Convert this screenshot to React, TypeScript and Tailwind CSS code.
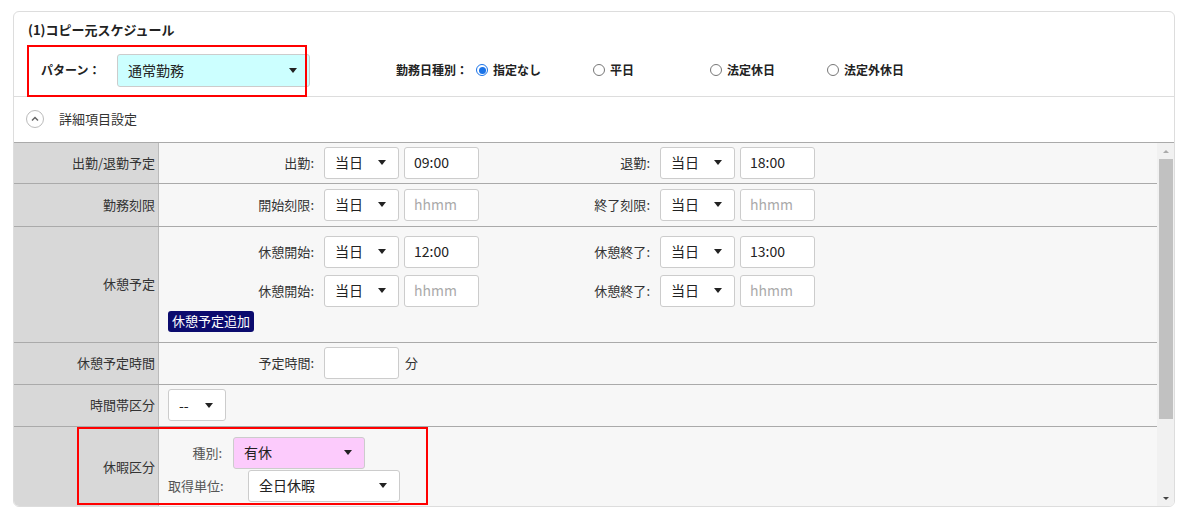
import React from "react";

const font = { fontFamily: '"Noto Sans CJK JP", "Noto Sans", sans-serif' };

function Caret() {
    return <span className="w-0 h-0 border-l-[4px] border-r-[4px] border-t-[5px] border-l-transparent border-r-transparent border-t-[#222]" />;
}

function Sel({ value, w, bg = "bg-white", h = "h-[32px]" }: { value: string; w: string; bg?: string; h?: string }) {
    return (
        <div className={`${w} ${h} ${bg} border border-[#ccc] rounded-[3px] flex items-center justify-between pl-[10px] pr-[12px] text-[14px] text-[#222]`}>
            <span>{value}</span>
            <Caret />
        </div>
    );
}

function Inp({ value, placeholder }: { value?: string; placeholder?: string }) {
    return (
        <div className="w-[75px] h-[32px] bg-white border border-[#ccc] rounded-[3px] flex items-center pl-[9px] text-[14px]">
            {value ? <span className="text-[#222]">{value}</span> : <span className="text-[#aaa]">{placeholder}</span>}
        </div>
    );
}

function Pair({ l1, v1, p1, l2, v2, p2 }: { l1: string; v1?: string; p1?: string; l2: string; v2?: string; p2?: string }) {
    return (
        <div className="flex items-center">
            <div className="w-[165px] text-right pr-[10px] text-[13px] text-[#333]">{l1}:</div>
            <Sel value="当日" w="w-[75px]" />
            <div className="w-[5px]" />
            <Inp value={v1} placeholder={p1} />
            <div className="w-[181px] text-right pr-[10px] text-[13px] text-[#333]">{l2}:</div>
            <Sel value="当日" w="w-[75px]" />
            <div className="w-[5px]" />
            <Inp value={v2} placeholder={p2} />
        </div>
    );
}

function Row({ label, h, children, last }: { label: string; h: string; children: React.ReactNode; last?: boolean }) {
    return (
        <div className={`flex ${h} ${last ? "" : "border-b border-[#aaa]"}`}>
            <div className="w-[145px] shrink-0 bg-[#d8d8d8] border-r border-[#bbb] flex items-center justify-end pr-[3px] text-[13px] text-[#333]">{label}</div>
            <div className="flex-1 bg-[#f7f7f7]">{children}</div>
        </div>
    );
}

function Radio({ on, label }: { on?: boolean; label: string }) {
    return (
        <div className="flex items-center gap-[5px] w-[117px]">
            <span className={`w-[12px] h-[12px] rounded-full border ${on ? "border-[#1a73e8] bg-white flex items-center justify-center" : "border-[#777] bg-white"}`}>
                {on && <span className="w-[7px] h-[7px] rounded-full bg-[#1a73e8]" />}
            </span>
            <span className="font-bold text-[12px] text-[#222]">{label}</span>
        </div>
    );
}

export default function App() {
    return (
        <div className="w-[1189px] h-[514px] bg-white pt-[11px] pl-[13px]" style={font}>
            <div className="w-[1162px] h-[496px] border border-[#ddd] rounded-[6px] overflow-hidden flex flex-col">
                <div className="px-[14px] pt-[8px] text-[13px] font-bold text-[#222]">(1)コピー元スケジュール</div>
                <div className="flex items-center h-[52px] pl-[27px] mt-[5px] border-b border-[#ddd]">
                    <div className="relative flex items-center">
                        <div className="absolute -left-[14px] -top-[9px] w-[280px] h-[52px] border-2 border-[#f00]" />
                        <span className="font-bold text-[12px] text-[#222] w-[76px]">パターン：</span>
                        <Sel value="通常勤務" w="w-[193px]" bg="bg-[#ccffff]" h="h-[33px]" />
                    </div>
                    <div className="ml-[86px] flex items-center">
                        <span className="font-bold text-[12px] text-[#222] mr-[8px]">勤務日種別：</span>
                        <Radio on label="指定なし" />
                        <Radio label="平日" />
                        <Radio label="法定休日" />
                        <Radio label="法定外休日" />
                    </div>
                </div>
                <div className="flex items-center h-[46px] pl-[12px] gap-[15px] border-b border-[#aaa]">
                    <span className="w-[18px] h-[18px] rounded-full border border-[#bbb] flex items-center justify-center">
                        <svg width="10" height="10" viewBox="0 0 10 10"><path d="M2 6.5 L5 3.5 L8 6.5" fill="none" stroke="#666" strokeWidth="1.5" /></svg>
                    </span>
                    <span className="text-[13px] text-[#333]">詳細項目設定</span>
                </div>
                <div className="flex flex-1 overflow-hidden">
                    <div className="flex-1 overflow-hidden">
                        <Row label="出勤/退勤予定" h="h-[41px]">
                            <div className="h-full flex items-center"><Pair l1="出勤" v1="09:00" l2="退勤" v2="18:00" /></div>
                        </Row>
                        <Row label="勤務刻限" h="h-[43px]">
                            <div className="h-full flex items-center"><Pair l1="開始刻限" p1="hhmm" l2="終了刻限" p2="hhmm" /></div>
                        </Row>
                        <Row label="休憩予定" h="h-[116px]">
                            <div className="flex flex-col gap-[7px] pt-[9px]">
                                <Pair l1="休憩開始" v1="12:00" l2="休憩終了" v2="13:00" />
                                <Pair l1="休憩開始" p1="hhmm" l2="休憩終了" p2="hhmm" />
                            </div>
                            <div className="ml-[9px] mt-[4px] inline-flex items-center h-[21px] px-[4px] bg-[#0b0b6e] rounded-[3px] text-white text-[13px]">休憩予定追加</div>
                        </Row>
                        <Row label="休憩予定時間" h="h-[42px]">
                            <div className="h-full flex items-center">
                                <div className="w-[165px] text-right pr-[10px] text-[13px] text-[#333]">予定時間:</div>
                                <div className="w-[75px] h-[32px] bg-white border border-[#ccc] rounded-[3px]" />
                                <span className="ml-[6px] text-[13px] text-[#333]">分</span>
                            </div>
                        </Row>
                        <Row label="時間帯区分" h="h-[42px]">
                            <div className="h-full flex items-center pl-[9px]"><Sel value="--" w="w-[58px]" /></div>
                        </Row>
                        <Row label="休暇区分" h="h-[80px]" last>
                            <div className="relative flex flex-col pt-[10px] pl-[9px]">
                                <div className="absolute -left-[82px] top-0 w-[351px] h-[78px] border-2 border-[#f00]" />
                                <div className="flex items-center">
                                    <span className="w-[65px] text-right pr-[11px] text-[13px] text-[#555]">種別:</span>
                                    <Sel value="有休" w="w-[132px]" bg="bg-[#fccbfc]" />
                                </div>
                                <div className="flex items-center mt-[1px]">
                                    <span className="w-[80px] text-[13px] text-[#555]">取得単位:</span>
                                    <Sel value="全日休暇" w="w-[152px]" />
                                </div>
                            </div>
                        </Row>
                    </div>
                    <div className="w-[17px] bg-[#f1f1f1] flex flex-col items-center">
                        <span className="mt-[7px] w-0 h-0 border-l-[3px] border-r-[3px] border-b-[3px] border-l-transparent border-r-transparent border-b-[#aaa]" />
                        <div className="w-[14px] h-[260px] bg-[#c1c1c1] mt-[6px]" />
                        <div className="flex-1" />
                        <span className="mb-[6px] w-0 h-0 border-l-[3px] border-r-[3px] border-t-[3px] border-l-transparent border-r-transparent border-t-[#444]" />
                    </div>
                </div>
            </div>
        </div>
    );
}
